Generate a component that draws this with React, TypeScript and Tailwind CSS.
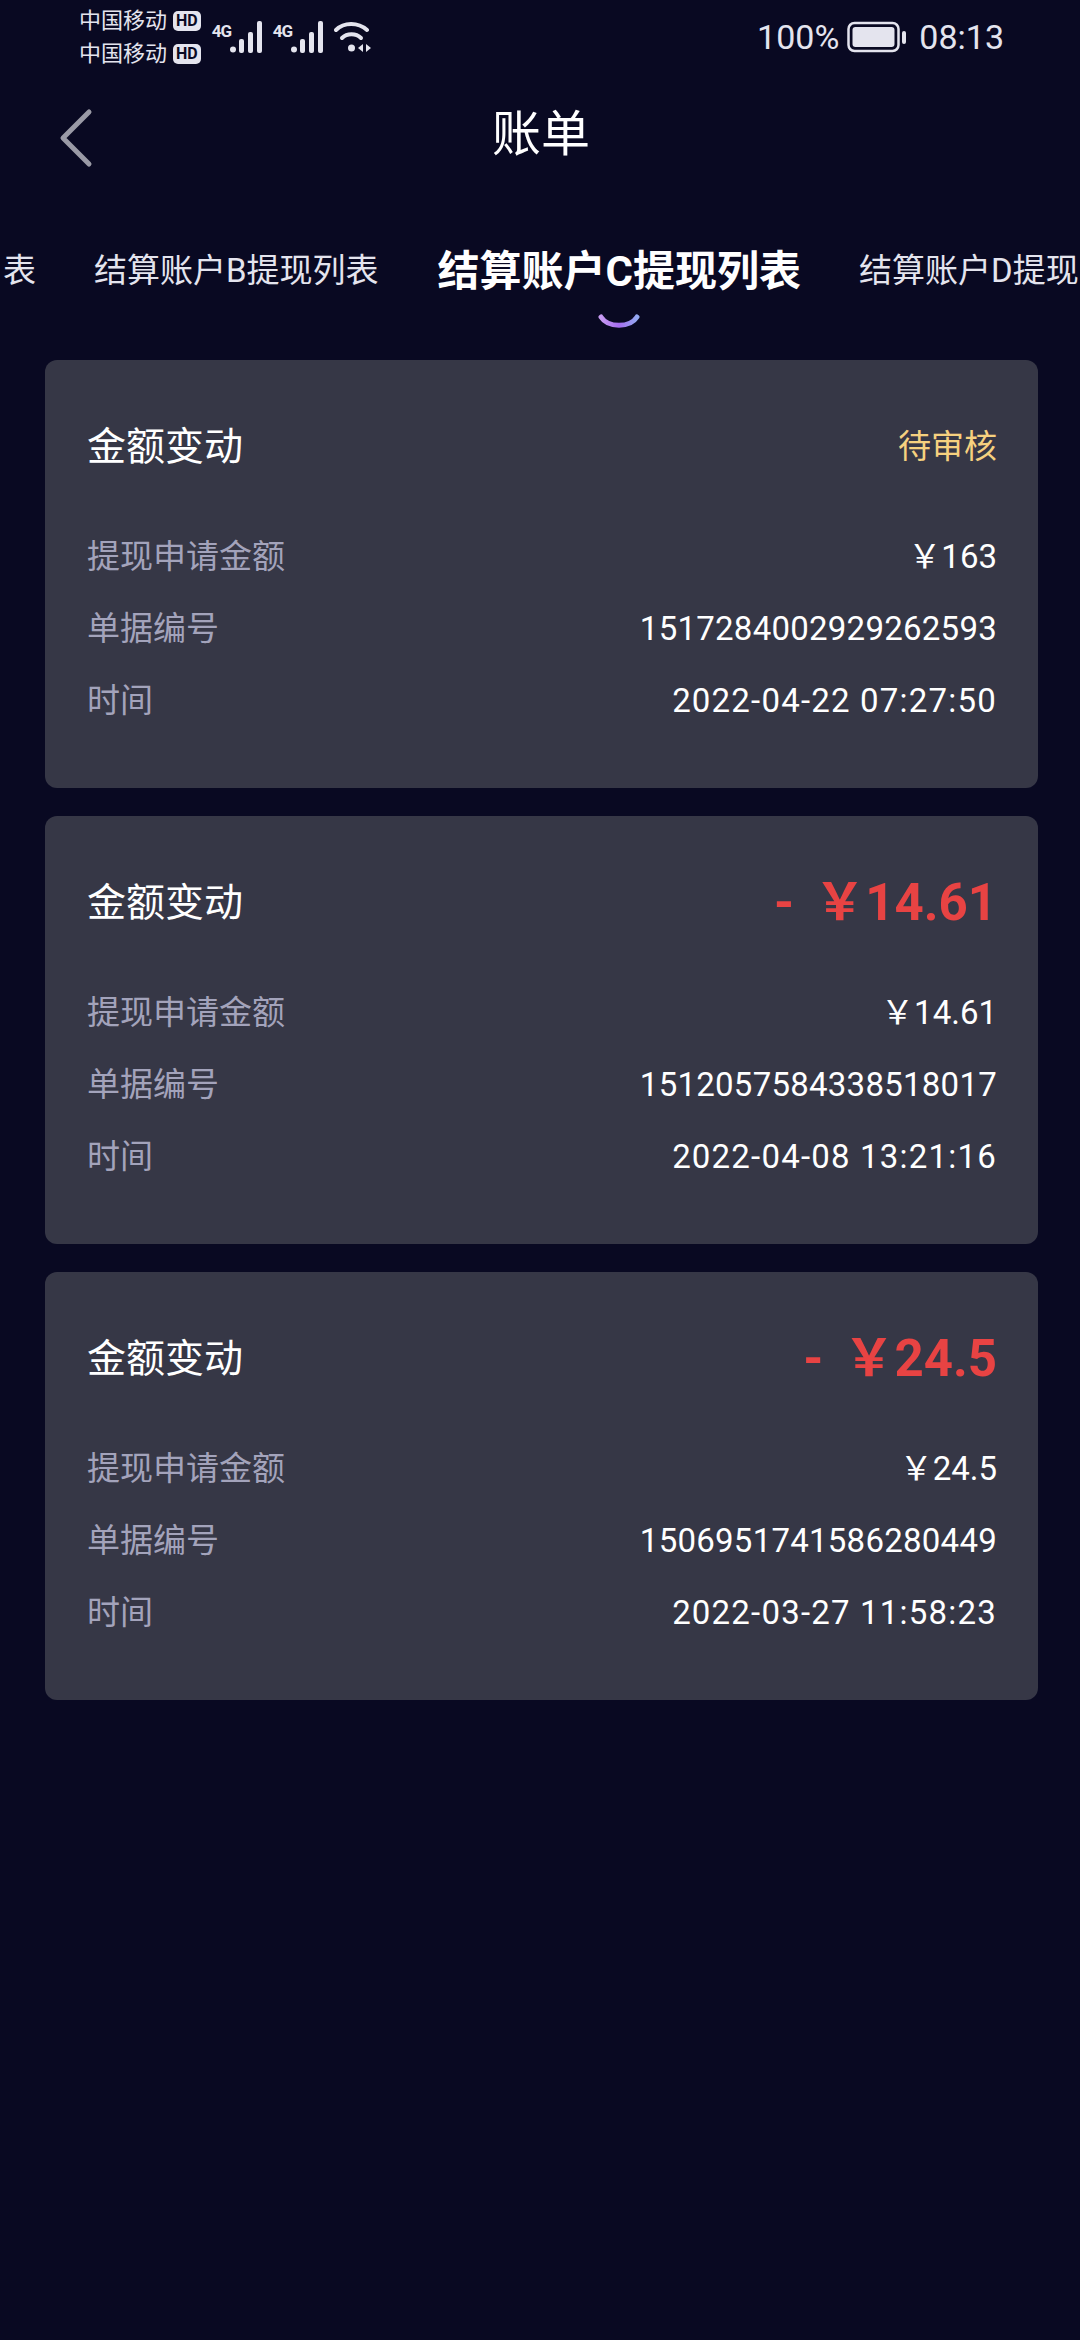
const FONT = "font-['Roboto','Noto_Sans_CJK_SC',sans-serif]";

type BillRecord = {
  status?: string;
  change?: string;
  amount: string;
  billNo: string;
  time: string;
};

const RECORDS: BillRecord[] = [
  { status: "待审核", amount: "￥163", billNo: "1517284002929262593", time: "2022-04-22 07:27:50" },
  { change: "14.61", amount: "￥14.61", billNo: "1512057584338518017", time: "2022-04-08 13:21:16" },
  { change: "24.5", amount: "￥24.5", billNo: "1506951741586280449", time: "2022-03-27 11:58:23" },
];

function CarrierLine() {
  return (
    <div className="flex items-center gap-[6px] h-[33px]">
      <span className="text-[22px] leading-none text-[#e4e4ee]">中国移动</span>
      <span className="rounded-[5px] bg-[#e4e4ee] px-[3px] h-[20px] flex items-center text-[16px] font-bold leading-none text-[#0a0a24]">HD</span>
    </div>
  );
}

function Signal() {
  return (
    <div className="relative w-[50px] h-[32px]">
      <span className="absolute left-0 top-[2px] text-[17px] font-bold leading-none tracking-tighter text-[#e4e4ee]">4G</span>
      <svg className="absolute left-[18px] top-0" width="32" height="32" viewBox="0 0 32 32" fill="#e4e4ee">
        <circle cx="3" cy="28.5" r="3" />
        <rect x="9" y="18" width="5" height="14" rx="2" />
        <rect x="18" y="11" width="5" height="21" rx="2" />
        <rect x="27" y="0" width="5" height="32" rx="2" />
      </svg>
    </div>
  );
}

function Wifi() {
  return (
    <svg width="38" height="32" viewBox="0 0 38 32" fill="none" stroke="#e4e4ee" strokeWidth="4" strokeLinecap="round">
      <path d="M2 9C10 1 24 1 33 9" />
      <path d="M8 17C13 12 22 12 27 17" />
      <circle cx="17.5" cy="27" r="3.5" fill="#e4e4ee" stroke="none" />
      <path d="M29 23v8l-5-4z" fill="#e4e4ee" stroke="none" />
      <path d="M32 23v8l5-4z" fill="#e4e4ee" stroke="none" />
    </svg>
  );
}

function Battery() {
  return (
    <svg width="59" height="32" viewBox="0 0 59 32" fill="none">
      <rect x="1.5" y="2" width="50" height="28" rx="6" stroke="#e4e4ee" strokeWidth="2.5" />
      <rect x="5.5" y="6" width="42" height="20" rx="3" fill="#e4e4ee" />
      <rect x="55" y="10" width="4" height="13" rx="2" fill="#e4e4ee" />
    </svg>
  );
}

function Row({ label, value, tracking }: { label: string; value: string; tracking: string }) {
  return (
    <div className="flex items-center justify-between h-[72px]">
      <span className="text-[33px] text-[#a3a3bb]">{label}</span>
      <span className={`text-[33px] text-white ${tracking}`}>{value}</span>
    </div>
  );
}

function RecordCard({ record }: { record: BillRecord }) {
  return (
    <div className="h-[428px] rounded-[12px] bg-[#363746] pl-[42px] pr-[41px] pt-[27px]">
      <div className="flex items-center justify-between h-[120px] mb-[14px]">
        <span className="text-[39px] text-white">金额变动</span>
        {record.status ? (
          <span className="text-[33px] text-[#f6d17f]">{record.status}</span>
        ) : (
          <span className="flex items-center text-[51px] font-bold text-[#e84343]">
            <span className="mr-[20px]">-</span>
            <span>￥{record.change}</span>
          </span>
        )}
      </div>
      <Row label="提现申请金额" value={record.amount} tracking="tracking-normal" />
      <Row label="单据编号" value={record.billNo} tracking="tracking-[0.25px]" />
      <Row label="时间" value={record.time} tracking="tracking-[1.2px]" />
    </div>
  );
}

export default function App() {
  return (
    <div className={`${FONT} w-[1080px] h-[2340px] bg-[#090922] text-white overflow-hidden`}>
      {/* status bar */}
      <div className="flex items-center justify-between h-[74px] pl-[79px] pr-[76px]">
        <div className="flex items-center">
          <div className="flex flex-col">
            <CarrierLine />
            <CarrierLine />
          </div>
          <div className="flex items-center gap-[11px] ml-[11px]">
            <Signal />
            <Signal />
            <Wifi />
          </div>
        </div>
        <div className="flex items-center gap-[8px] text-[34px] text-[#e4e4ee]">
          <span>100%</span>
          <Battery />
          <span className="ml-[5px]">08:13</span>
        </div>
      </div>

      {/* header */}
      <div className="relative flex items-center justify-center h-[120px]">
        <svg className="absolute left-[58px] top-[34px]" width="36" height="60" viewBox="0 0 36 60" fill="none" stroke="#9a9aa6" strokeWidth="5" strokeLinecap="round" strokeLinejoin="round">
          <path d="M31 4 5 30l26 26" />
        </svg>
        <h1 className="text-[49px] font-normal leading-none pl-[2px]">账单</h1>
      </div>

      {/* tabs */}
      <div className="flex items-center h-[70px] mt-[42px] overflow-hidden whitespace-nowrap text-[#e4e4ee] text-[33px]">
        <span className="ml-[3px]">表</span>
        <span className="ml-[58px]">结算账户B提现列表</span>
        <span className="ml-[59px] text-[42px] font-bold text-white">结算账户C提现列表</span>
        <span className="ml-[58px]">结算账户D提现</span>
      </div>
      <div className="flex justify-center h-[34px] pt-[8px] pl-[158px]">
        <svg width="42" height="16" viewBox="0 0 42 16" fill="none">
          <defs>
            <linearGradient id="tabMark" gradientUnits="userSpaceOnUse" x1="3" x2="39" y1="0" y2="0">
              <stop offset="0" stopColor="#c79bf2" />
              <stop offset="0.5" stopColor="#a66df0" />
              <stop offset="1" stopColor="#93a9f2" />
            </linearGradient>
          </defs>
          <path d="M3 3C10 14 32 14 39 3" stroke="url(#tabMark)" strokeWidth="5" strokeLinecap="round" />
        </svg>
      </div>

      {/* records */}
      <div className="flex flex-col gap-[28px] mt-[20px] pl-[45px] pr-[42px]">
        {RECORDS.map((r) => (
          <RecordCard key={r.billNo} record={r} />
        ))}
      </div>
    </div>
  );
}
